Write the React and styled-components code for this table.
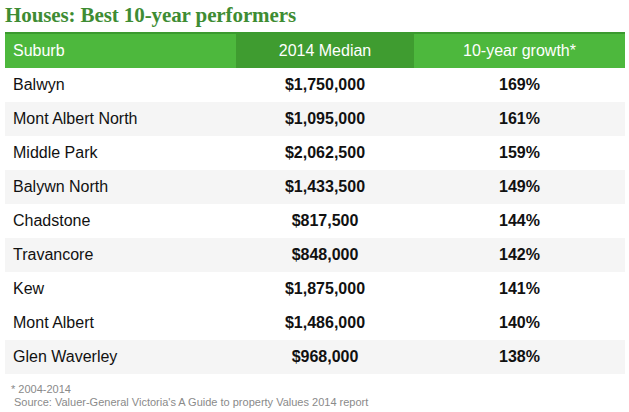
import React from "react";
import styled, { createGlobalStyle } from "styled-components";

const Global = createGlobalStyle`
  html, body { margin: 0; padding: 0; background: #fff; }
  body { font-family: "Liberation Sans", Arial, sans-serif; }
`;

const Page = styled.div`
  width: 629px;
  height: 412px;
  padding: 4px 4px 0 5px;
  box-sizing: border-box;
  overflow: hidden;
`;

const Title = styled.h1`
  margin: 0 0 5px 0;
  font-family: "Liberation Serif", "Times New Roman", serif;
  font-weight: bold;
  font-size: 21px;
  line-height: 23px;
  color: #3e8c33;
  letter-spacing: -0.1px;
`;

const Table = styled.div`
  width: 620px;
  display: flex;
  flex-direction: column;
`;

const Row = styled.div`
  display: grid;
  grid-template-columns: 231px 178px 211px;
  height: ${(p) => (p.$head ? "36px" : "34px")};
  background: ${(p) => (p.$shade ? "#f5f5f5" : "#fff")};
  ${(p) => (p.$head ? "border-top: 2px solid #3b9a2f; box-sizing: border-box;" : "")}
`;

const Cell = styled.div`
  display: flex;
  align-items: center;
  justify-content: ${(p) => (p.$left ? "flex-start" : "center")};
  padding-left: ${(p) => (p.$left ? "8px" : "0")};
  padding-bottom: 1px;
  font-size: 16px;
  font-weight: ${(p) => (p.$bold ? "bold" : "normal")};
  color: #111;
`;

const HeadCell = styled(Cell)`
  color: #fff;
  background: ${(p) => (p.$dark ? "#3f9c30" : "#4db83d")};
`;

const Notes = styled.div`
  margin-top: 9px;
  padding-left: 6px;
  font-size: 11px;
  line-height: 13px;
  color: #8a8a8a;
`;

const Source = styled.div`
  padding-left: 3px;
`;

const rows = [
  ["Balwyn", "$1,750,000", "169%", false],
  ["Mont Albert North", "$1,095,000", "161%", true],
  ["Middle Park", "$2,062,500", "159%", false],
  ["Balywn North", "$1,433,500", "149%", true],
  ["Chadstone", "$817,500", "144%", false],
  ["Travancore", "$848,000", "142%", true],
  ["Kew", "$1,875,000", "141%", false],
  ["Mont Albert", "$1,486,000", "140%", false],
  ["Glen Waverley", "$968,000", "138%", true],
];

export default function App() {
  return (
    <Page>
      <Global />
      <Title>Houses: Best 10-year performers</Title>
      <Table>
        <Row $head>
          <HeadCell $left>Suburb</HeadCell>
          <HeadCell $dark>2014 Median</HeadCell>
          <HeadCell>10-year growth*</HeadCell>
        </Row>
        {rows.map(([s, m, g, shade]) => (
          <Row key={s} $shade={shade}>
            <Cell $left>{s}</Cell>
            <Cell $bold>{m}</Cell>
            <Cell $bold>{g}</Cell>
          </Row>
        ))}
      </Table>
      <Notes>
        <div>* 2004-2014</div>
        <Source>Source: Valuer-General Victoria's A Guide to property Values 2014 report</Source>
      </Notes>
    </Page>
  );
}
